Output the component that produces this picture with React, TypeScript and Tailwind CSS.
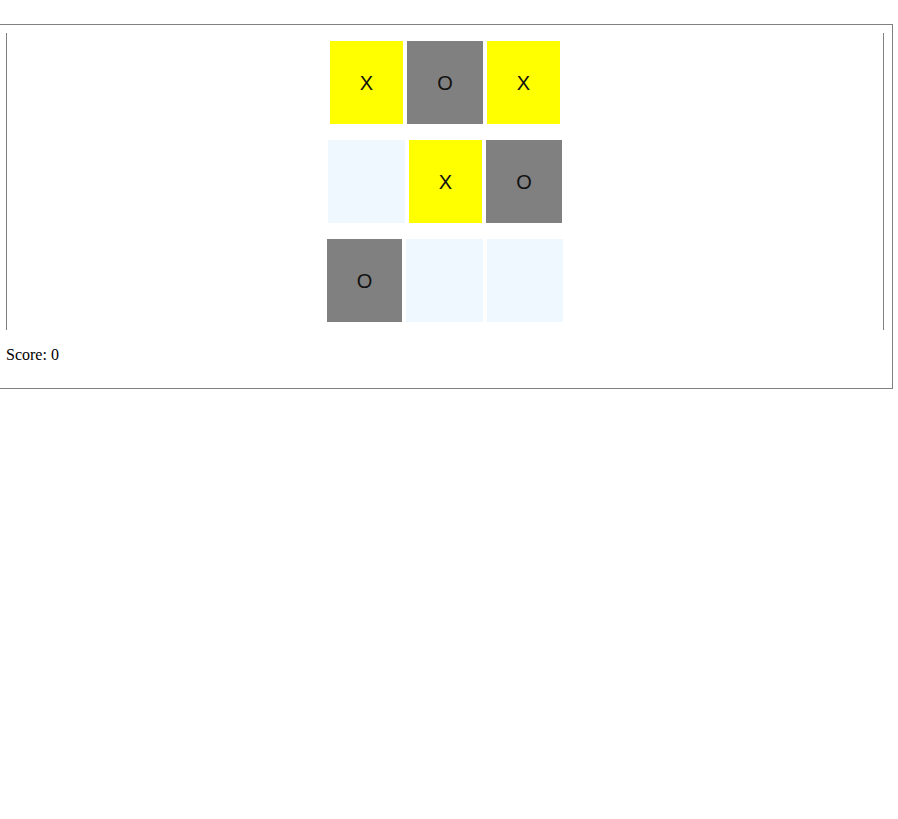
import React from "react";

type Cell = { v: string; w: number };

const rows: Cell[][] = [
  [
    { v: "X", w: 73 },
    { v: "O", w: 76 },
    { v: "X", w: 73 },
  ],
  [
    { v: "", w: 77 },
    { v: "X", w: 73 },
    { v: "O", w: 76 },
  ],
  [
    { v: "O", w: 75 },
    { v: "", w: 77 },
    { v: "", w: 76 },
  ],
];

function CellBox({ c }: { c: Cell }) {
  const bg =
    c.v === "X" ? "bg-[#ffff00]" : c.v === "O" ? "bg-[#808080]" : "bg-[#f0f8ff]";
  return (
    <div
      className={`${bg} h-[83px] flex items-center justify-center text-[20px] text-[#111] font-['Liberation_Sans',Arial,sans-serif]`}
      style={{ width: c.w }}
    >
      {c.v}
    </div>
  );
}

export default function App() {
  return (
    <div className="bg-white min-h-[819px] pt-[24px] font-['Liberation_Serif','Times_New_Roman',serif] text-black">
      <div className="-ml-[3px] w-[896px] border border-[#808080] p-2">
        <div className="border-l border-r border-[#808080] pt-2 pb-2 flex flex-col items-center gap-4">
          {rows.map((r, i) => (
            <div key={i} className="flex gap-1">
              {r.map((c, j) => (
                <CellBox key={j} c={c} />
              ))}
            </div>
          ))}
        </div>
        <p className="my-4 text-[16px] leading-[18px]">Score: 0</p>
      </div>
    </div>
  );
}
